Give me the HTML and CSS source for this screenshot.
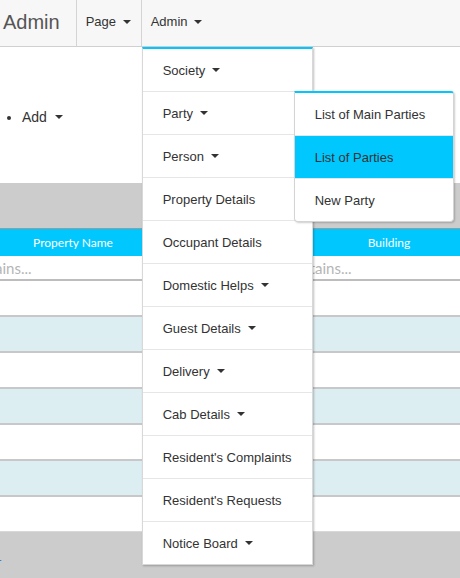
FILE: index.html
```html
<!DOCTYPE html>
<html>
<head>
<meta charset="utf-8">
<link rel="stylesheet" href="styles.css">
</head>
<body>
<nav class="navbar">
  <span class="brand">Admin</span>
  <div class="nav-item">Page <span class="caret"></span></div>
  <div class="nav-item open">Admin <span class="caret"></span>
    <ul class="dropdown">
      <li>Society <span class="caret"></span></li>
      <li class="has-sub">Party <span class="caret"></span>
        <ul class="submenu">
          <li>List of Main Parties</li>
          <li class="active">List of Parties</li>
          <li>New Party</li>
        </ul>
      </li>
      <li>Person <span class="caret"></span></li>
      <li>Property Details</li>
      <li>Occupant Details</li>
      <li>Domestic Helps <span class="caret"></span></li>
      <li>Guest Details <span class="caret"></span></li>
      <li>Delivery <span class="caret"></span></li>
      <li>Cab Details <span class="caret"></span></li>
      <li>Resident's Complaints</li>
      <li>Resident's Requests</li>
      <li>Notice Board <span class="caret"></span></li>
    </ul>
  </div>
</nav>
<ul class="actions">
  <li>Add <span class="caret"></span></li>
</ul>
<div class="grid">
  <div class="group-panel"></div>
  <div class="table">
    <div class="row head">
      <div class="cell c1">Property Name</div>
      <div class="cell c2"></div>
      <div class="cell c3">Building</div>
    </div>
    <div class="row filter">
      <div class="cell c1"><span class="ph">Contains...</span></div>
      <div class="cell c2"></div>
      <div class="cell c3"><span class="ph">Contains...</span></div>
    </div>
    <div class="row data"></div>
    <div class="row data alt"></div>
    <div class="row data"></div>
    <div class="row data alt"></div>
    <div class="row data"></div>
    <div class="row data alt"></div>
    <div class="row data"></div>
  </div>
  <div class="pager"><span class="pager-link">1</span></div>
</div>
</body>
</html>
```
FILE: styles.css
```css
html, body {
  margin: 0;
  padding: 0;
  overflow: hidden;
}
body {
  font-family: "Liberation Sans", Arial, sans-serif;
  font-size: 13px;
  color: #333;
  background: #fff;
  width: 460px;
  height: 578px;
}
ul { margin: 0; padding: 0; list-style: none; }

.navbar {
  height: 46px;
  background: #f7f7f7;
  border-bottom: 1px solid #d0d0d0;
  display: flex;
  align-items: stretch;
}
.brand {
  font-size: 20px;
  color: #555;
  padding: 0 16px 0 3px;
  line-height: 44px;
}
.nav-item {
  position: relative;
  border-left: 1px solid #d4d4d4;
  padding: 0 10px 0 9px;
  line-height: 43px;
  color: #333;
}
.caret {
  display: inline-block;
  width: 0;
  height: 0;
  border-top: 4px solid #333;
  border-left: 4px solid transparent;
  border-right: 4px solid transparent;
  vertical-align: middle;
  margin-left: 3px;
  margin-bottom: 2px;
}
.dropdown {
  position: absolute;
  left: 0;
  top: 47px;
  width: 169px;
  background: #fff;
  border: 1px solid #d8d8d8;
  border-top: 2px solid #00c8ff;
  box-shadow: 1px 1px 2px rgba(0,0,0,0.25);
  z-index: 10;
  line-height: normal;
}
.dropdown > li {
  position: relative;
  height: 42px;
  border-bottom: 1px solid #e6e6e6;
  padding-left: 20px;
  display: flex;
  align-items: center;
  white-space: nowrap;
}
.dropdown > li:last-child { border-bottom: none; }
.dropdown > li .caret { margin-left: 7px; margin-bottom: 0; }
.submenu {
  position: absolute;
  left: 151px;
  top: -1px;
  width: 158px;
  background: #fff;
  border: 1px solid #d4d4d4;
  border-top: 2px solid #00c8ff;
  border-radius: 0 3px 4px 4px;
  box-shadow: 1px 1px 2px rgba(0,0,0,0.2);
  z-index: 11;
}
.submenu li {
  height: 42px;
  border-bottom: 1px solid #e6e6e6;
  padding-left: 20px;
  display: flex;
  align-items: center;
}
.submenu li:last-child { border-bottom: none; }
.submenu li.active { background: #00c8ff; }

.actions {
  list-style: disc;
  padding-left: 22px;
  margin: 61px 0 0 0;
  height: 75px;
}
.actions li { line-height: 18px; font-size: 14px; }
.actions .caret { margin-left: 4px; }

.group-panel {
  height: 45px;
  background: #cccccc;
  border-bottom: 1px solid #9a9a9a;
}
.table {
  margin-left: -42px;
  width: 540px;
}
.row { display: flex; }
.cell { box-sizing: border-box; }
.c1 { width: 230px; }
.c2 { width: 92px; }
.c3 { width: 218px; }
.head {
  height: 27px;
  background: #00c8ff;
  color: #fff;
  font-family: Lato, "Open Sans", sans-serif;
  font-size: 12px;
}
.head .cell {
  display: flex;
  align-items: center;
  justify-content: center;
}
.filter {
  height: 23px;
  border-bottom: 2px solid #bdbdbd;
  background: #fff;
}
.filter .cell {
  padding-left: 3px;
  display: flex;
  align-items: center;
}
.filter .c1 { padding-left: 5px; }
.ph {
  color: #b5b5b5;
  font-family: Lato, "Open Sans", sans-serif;
  font-size: 15px;
}
.data {
  height: 34px;
  border-bottom: 2px solid #c8c8c8;
  background: #fff;
}
.data.alt { background: #ddeef3; }
.data:last-child { border-bottom: 1px solid #d8d8d8; }
.pager {
  height: 47px;
  background: #cccccc;
  position: relative;
}
.pager-link {
  position: absolute;
  left: -6px;
  top: 16px;
  color: #3a7fd0;
  font-size: 14px;
}
```
